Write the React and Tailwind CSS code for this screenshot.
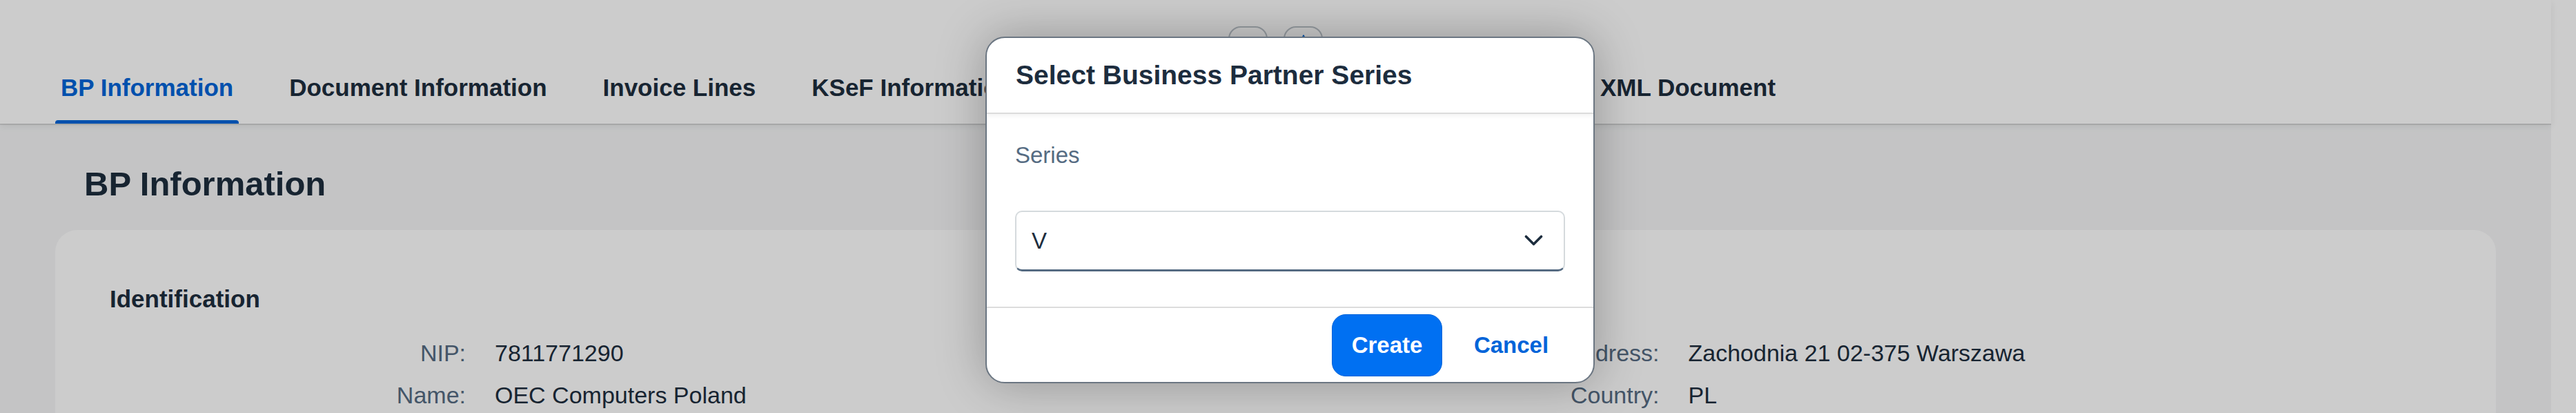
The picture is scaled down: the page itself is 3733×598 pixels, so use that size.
import React from 'react';

const tabs = [
  { label: 'BP Information', active: true },
  { label: 'Document Information' },
  { label: 'Invoice Lines' },
  { label: 'KSeF Information' },
  { spacer: true },
  { label: 'XML Document' },
];

const fields = [
  { label: 'NIP:', value: '7811771290' },
  { label: 'Address:', value: 'Zachodnia 21 02-375 Warszawa' },
  { label: 'Name:', value: 'OEC Computers Poland' },
  { label: 'Country:', value: 'PL' },
];

const Tab = ({ label, active }) => (
  <div
    className={`relative h-[104px] px-[8px] flex items-center text-[35px] leading-[40px] font-bold whitespace-nowrap ${
      active ? 'text-[#0064d9]' : 'text-[#1d2d3e]'
    }`}
  >
    {label}
    {active && <div className="absolute left-0 right-0 bottom-0 h-[5px] rounded-t-[4px] bg-[#0064d9]" />}
  </div>
);

const Field = ({ label, value }) => (
  <div className="flex items-start text-[34px] leading-[61px]">
    <span className="w-[516px] shrink-0 text-right text-[#556b82]">{label}</span>
    <span className="ml-[42px] text-[#1d2d3e] whitespace-nowrap">{value}</span>
  </div>
);

const SeriesDialog = () => (
  <div className="absolute z-30 left-[1428px] top-[53px] w-[883px] rounded-[28px] border-2 border-[#6b7682] bg-white overflow-hidden shadow-[0_0_70px_rgba(0,0,0,0.28)]">
    <div className="relative h-[110px] flex items-center pl-[42px] border-b-2 border-[#dcdcdc] shadow-[0_3px_6px_rgba(0,0,0,0.05)]">
      <h2 className="text-[39px] leading-[44px] font-bold text-[#1d2d3e]">Select Business Partner Series</h2>
    </div>
    <div className="px-[41px] pt-[40px] pb-[51px]">
      <div className="text-[33px] leading-[40px] text-[#556b82]">Series</div>
      <div className="mt-[60px] h-[88px] flex items-center justify-between pl-[22px] pr-[30px] rounded-[10px] border-2 border-[#d5dadd] border-b-[3px] border-b-[#556b82]">
        <span className="text-[33px] text-[#1d2d3e]">V</span>
        <svg width="27" height="17" viewBox="0 0 27 17" fill="none">
          <path d="M2.5 2.5 L13.5 13.5 L24.5 2.5" stroke="#1d2d3e" strokeWidth="3.6" strokeLinecap="round" strokeLinejoin="round" />
        </svg>
      </div>
    </div>
    <div className="border-t-2 border-[#dcdcdc] pt-[9px] pb-[8px] pr-[37px] flex justify-end gap-[18px]">
      <button className="w-[160px] h-[90px] rounded-[20px] bg-[#0070f2] border border-[#0064d9] text-white text-[33px] font-bold">
        Create
      </button>
      <button className="w-[164px] h-[90px] rounded-[20px] text-[#0064d9] text-[33px] font-bold">Cancel</button>
    </div>
  </div>
);

export default function App() {
  return (
    <div className="relative h-[598px] w-full overflow-hidden flex bg-[#f5f6f7] font-['Liberation_Sans',Arial,sans-serif]">
      <div className="flex-1 flex flex-col min-w-0">
        <header className="relative z-10 shrink-0 h-[179px] bg-white flex items-end px-[80px] shadow-[0_2px_0_rgba(0,0,0,0.1),0_4px_10px_rgba(0,0,0,0.07)]">
          <div className="absolute top-[38px] left-[1780px] w-[57px] h-[57px] rounded-[18px] border-2 border-[#bcc3ca] bg-white" />
          <div className="absolute top-[38px] left-[1860px] w-[57px] h-[57px] rounded-[18px] border-2 border-[#bcc3ca] bg-white flex justify-center pt-[8px]">
            <svg width="22" height="22" viewBox="0 0 22 22">
              <path d="M11 2 L19 14 L3 14 Z" fill="#0064d9" />
            </svg>
          </div>
          <nav className="flex gap-[65px]">
            {tabs.map((t, i) =>
              t.spacer ? <div key={i} className="w-[705px] h-[104px]" /> : <Tab key={t.label} {...t} />
            )}
          </nav>
        </header>
        <main className="shrink-0 px-[80px] pt-[59px]">
          <h1 className="ml-[42px] text-[49px] leading-[56px] font-bold text-[#1d2d3e]">BP Information</h1>
          <section className="mt-[39px] rounded-[32px] bg-white px-[79px] pt-[80px] pb-[40px]">
            <h3 className="text-[35px] leading-[40px] font-bold text-[#1d2d3e]">Identification</h3>
            <div className="mt-[28px] grid grid-cols-2 gap-x-[80px]">
              {fields.map((f) => (
                <Field key={f.label} {...f} />
              ))}
            </div>
          </section>
        </main>
      </div>
      <div className="w-[36px] shrink-0 bg-white" />
      <div className="absolute z-20 inset-0 bg-black/20" />
      <SeriesDialog />
    </div>
  );
}
